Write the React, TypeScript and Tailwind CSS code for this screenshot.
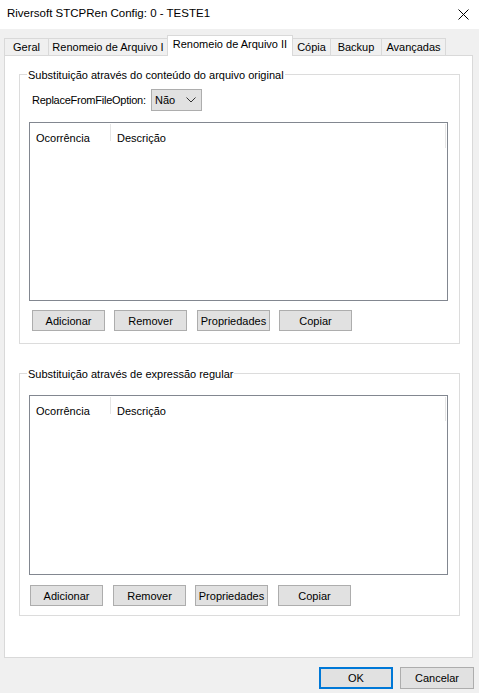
import { ReactNode } from "react";

const tabs = [
  { label: "Geral", w: "w-[45px]" },
  { label: "Renomeio de Arquivo I", w: "w-[120px]" },
  { label: "Renomeio de Arquivo II", w: "w-[126px]", active: true },
  { label: "Cópia", w: "w-[39px]" },
  { label: "Backup", w: "w-[52px]" },
  { label: "Avançadas", w: "w-[65px]" },
];

function WinButton({ children, className = "" }: { children: ReactNode; className?: string }) {
  return (
    <button
      className={`w-[73px] h-[21px] pt-px border border-[#adadad] bg-[#e1e1e1] flex items-center justify-center text-black ${className}`}
    >
      {children}
    </button>
  );
}

function ListView({ className = "" }: { className?: string }) {
  return (
    <div className={`ml-[9px] w-[419px] border border-[#828790] bg-white ${className}`}>
      <div className="flex h-[28px]">
        <div className="w-[80px] flex items-center pl-[6px] pt-[2px]">Ocorrência</div>
        <div className="w-px h-[17px] mt-[1px] bg-[#e5e5e5]" />
        <div className="w-[334px] flex items-center pl-[6px] pt-[2px]">Descrição</div>
        <div className="w-px h-[24px] mt-[1px] bg-[#e5e5e5]" />
      </div>
    </div>
  );
}

function GroupBox({ title, className = "", children }: { title: string; className?: string; children: ReactNode }) {
  return (
    <fieldset className={`w-[441px] border border-[#dcdcdc] ${className}`}>
      <legend className="ml-[7px] px-px leading-[16px] pt-px">{title}</legend>
      {children}
    </fieldset>
  );
}

export default function App() {
  return (
    <div className="w-[479px] h-[693px] bg-[#f0f0f0] flex flex-col text-[11px] text-[#000] whitespace-nowrap font-['Liberation_Sans',Arial,sans-serif]">
      {/* title bar */}
      <div className="h-[29px] bg-white flex items-center justify-between pl-[7px] pr-[10px] pb-px">
        <span className="text-[11.5px]">Riversoft STCPRen Config: 0 - TESTE1</span>
        <svg width="11" height="11" viewBox="0 0 11 11" stroke="#000" strokeWidth="1">
          <path d="M0.5 0.5l10 10M10.5 0.5l-10 10" />
        </svg>
      </div>

      {/* tabs */}
      <div className="h-[26px] flex items-end pl-[4px]">
        {tabs.map((t, i) =>
          t.active ? (
            <div
              key={t.label}
              className={`${t.w} h-[21px] -mb-px -ml-px relative z-10 bg-white border border-b-0 border-[#d9d9d9] flex items-center justify-center pb-[3px]`}
            >
              {t.label}
            </div>
          ) : (
            <div
              key={t.label}
              className={`${t.w} h-[17px] ${i > 0 ? "-ml-px" : ""} border border-b-0 border-[#d9d9d9] flex items-center justify-center pt-px`}
            >
              {t.label}
            </div>
          )
        )}
      </div>

      {/* tab page */}
      <div className="ml-[4px] w-[469px] h-[603px] border border-[#d9d9d9] bg-white pt-[10px] pl-[14px]">
        <GroupBox title="Substituição através do conteúdo do arquivo original" className="h-[278px]">
          <div className="mt-[6px] pl-[12px] flex items-center h-[22px]">
            <span className="w-[119px] pt-px tracking-[-0.25px]">ReplaceFromFileOption:</span>
            <div className="w-[51px] h-[22px] border border-[#adadad] bg-[#e1e1e1] flex items-center justify-between pl-[3px] pr-[5px]">
              <span className="pt-px">Não</span>
              <svg width="10" height="6" viewBox="0 0 10 6" fill="none" stroke="#333" strokeWidth="1">
                <path d="M0.5 0.5l4.5 4.5 4.5-4.5" />
              </svg>
            </div>
          </div>
          <ListView className="mt-[11px] h-[179px]" />
          <div className="mt-[9px] flex pl-[12px]">
            <WinButton>Adicionar</WinButton>
            <WinButton className="ml-[9px]">Remover</WinButton>
            <WinButton className="ml-[10px]">Propriedades</WinButton>
            <WinButton className="ml-[9px]">Copiar</WinButton>
          </div>
        </GroupBox>

        <GroupBox title="Substituição através de expressão regular" className="mt-[21px] h-[251px]">
          <ListView className="mt-[13px] h-[180px]" />
          <div className="mt-[10px] flex pl-[10px]">
            <WinButton>Adicionar</WinButton>
            <WinButton className="ml-[10px]">Remover</WinButton>
            <WinButton className="ml-[9px]">Propriedades</WinButton>
            <WinButton className="ml-[10px]">Copiar</WinButton>
          </div>
        </GroupBox>
      </div>

      {/* dialog buttons */}
      <div className="mt-[9px] flex justify-end gap-[7px] pr-[5px]">
        <button className="w-[74px] h-[22px] border-2 border-[#0078d7] bg-[#e1e1e1] flex items-center justify-center">
          OK
        </button>
        <button className="w-[74px] h-[22px] border border-[#adadad] bg-[#e1e1e1] flex items-center justify-center">
          Cancelar
        </button>
      </div>
    </div>
  );
}
